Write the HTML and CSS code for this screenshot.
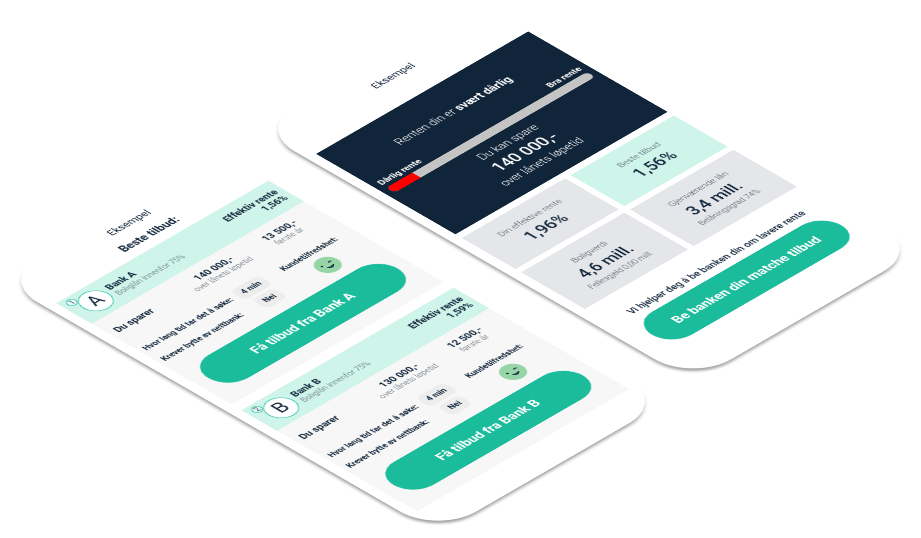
FILE: index.html
```html
<!DOCTYPE html>
<html lang="no">
<head>
<meta charset="utf-8">
<meta name="viewport" content="width=device-width, initial-scale=1">
<title>Boliglån</title>
<link rel="stylesheet" href="styles.css">
</head>
<body>
<main class="stage">

  <section class="phone phone-offers">
    <header class="offers-head">
      <p class="example">Eksempel</p>
      <h1 class="offers-title">Beste tilbud:</h1>
    </header>

    <article class="offer">
      <div class="offer-head">
        <span class="rank">1</span>
        <span class="logo">A</span>
        <div class="bank">
          <h2 class="strong">Bank A</h2>
          <p class="note">Boliglån innenfor 75%</p>
        </div>
        <div class="rate strong">
          <p>Effektiv rente</p>
          <p>1,56%</p>
        </div>
      </div>
      <div class="savings">
        <p class="strong">Du sparer</p>
        <div class="amount"><p class="strong">140 000,-</p><p class="note">over lånets løpetid</p></div>
        <div class="amount"><p class="strong">13 500,-</p><p class="note">første år</p></div>
      </div>
      <div class="details">
        <p class="question">Hvor lang tid tar det å søke:</p>
        <p class="answer">4 min</p>
        <p class="question satisfaction">Kundetilfredshet:</p>
        <p class="question">Krever bytte av nettbank:</p>
        <p class="answer">Nei</p>
        <svg class="smiley" viewBox="0 0 28 28" aria-hidden="true">
          <circle cx="14" cy="14" r="14" fill="#96d5a6"/>
          <circle cx="8" cy="12" r="1.3" fill="#10243a"/>
          <path d="M18 11.500q1.500-1.500 3 0" fill="none" stroke="#10243a" stroke-width="1.500" stroke-linecap="round"/>
          <path d="M10 17q5 6 9 0q-4.500 2.500-9 0z" fill="#10243a" stroke="#10243a" stroke-width="1" stroke-linejoin="round"/>
        </svg>
      </div>
      <button class="cta" type="button">Få tilbud fra Bank A</button>
    </article>

    <article class="offer">
      <div class="offer-head">
        <span class="rank">2</span>
        <span class="logo">B</span>
        <div class="bank">
          <h2 class="strong">Bank B</h2>
          <p class="note">Boliglån innenfor 75%</p>
        </div>
        <div class="rate strong">
          <p>Effektiv rente</p>
          <p>1,59%</p>
        </div>
      </div>
      <div class="savings">
        <p class="strong">Du sparer</p>
        <div class="amount"><p class="strong">130 000,-</p><p class="note">over lånets løpetid</p></div>
        <div class="amount"><p class="strong">12 500,-</p><p class="note">første år</p></div>
      </div>
      <div class="details">
        <p class="question">Hvor lang tid tar det å søke:</p>
        <p class="answer">4 min</p>
        <p class="question satisfaction">Kundetilfredshet:</p>
        <p class="question">Krever bytte av nettbank:</p>
        <p class="answer">Nei</p>
        <svg class="smiley" viewBox="0 0 28 28" aria-hidden="true">
          <circle cx="14" cy="14" r="14" fill="#96d5a6"/>
          <circle cx="8" cy="12" r="1.3" fill="#10243a"/>
          <path d="M18 11.500q1.500-1.500 3 0" fill="none" stroke="#10243a" stroke-width="1.500" stroke-linecap="round"/>
          <path d="M10 17q5 6 9 0q-4.500 2.500-9 0z" fill="#10243a" stroke="#10243a" stroke-width="1" stroke-linejoin="round"/>
        </svg>
      </div>
      <button class="cta" type="button">Få tilbud fra Bank B</button>
    </article>
  </section>

  <section class="phone phone-result">
    <header class="result-head">
      <p class="example">Eksempel</p>
    </header>
    <div class="hero">
      <p class="verdict">Renten din er <b>svært dårlig</b></p>
      <div class="scale-labels"><span>Dårlig rente</span><span>Bra rente</span></div>
      <div class="scale"><div class="scale-fill"></div></div>
      <p class="save-text">Du kan spare</p>
      <p class="save-amount">140 000,-</p>
      <p class="save-text">over lånets løpetid</p>
    </div>
    <div class="tiles">
      <div class="tile"><p class="tile-note">Din effektive rente</p><p class="tile-value">1,96%</p></div>
      <div class="tile tile-best"><p class="tile-note">Beste tilbud</p><p class="tile-value">1,56%</p></div>
      <div class="tile"><p class="tile-note">Boligverdi</p><p class="tile-value">4,6 mill.</p><p class="tile-sub">Fellesgjeld 0,00 mill.</p></div>
      <div class="tile"><p class="tile-note">Gjenværende lån</p><p class="tile-value">3,4 mill.</p><p class="tile-sub">Belåningsgrad 74%</p></div>
    </div>
    <p class="help">Vi hjelper deg å be banken din om lavere rente</p>
    <button class="cta" type="button">Be banken din matche tilbud</button>
  </section>

</main>
</body>
</html>
```

FILE: styles.css
```css
* { box-sizing: border-box; }

body {
  margin: 0;
  background: #fff;
  color: #10243a;
  font-family: Roboto, "Liberation Sans", sans-serif;
}

p, h1, h2 { margin: 0; font-size: inherit; font-weight: inherit; }

.stage {
  position: relative;
  min-height: 100vh;
  max-height: 100vh;
  overflow: hidden;
}

/* Phones lie on an isometric plane */
.phone {
  position: absolute;
  width: 324px;
  padding: 0 12px;
  border-radius: 54px;
  background: #fff;
  box-shadow: -4px 4px 4px -1px rgba(0, 0, 0, .36);
  transform-origin: 0 0;
  transform: rotateX(54.74deg) rotateZ(-45deg);
}

.phone-offers { left: -1px; top: 280px; padding-bottom: 28px; }
.phone-result { left: 256px; top: 129px; padding-bottom: 58px; }

.example { font-size: 13px; line-height: 20px; text-align: center; }

.cta {
  display: block;
  width: calc(100% - 32px);
  height: 56px;
  margin: 0 16px;
  padding: 0;
  border: 0;
  border-radius: 28px;
  background: #1abc9c;
  color: #fff;
  font: 700 16px/24px Roboto, "Liberation Sans", sans-serif;
}

/* Offers */
.offers-head { padding: 12px 0 5px; text-align: center; }
.offers-title { margin-top: 4px; font-size: 14px; font-weight: 700; line-height: 28px; }

.offer { margin-bottom: 14px; padding-bottom: 21px; background: #f7f7f7; }

.offer-head {
  position: relative;
  display: flex;
  align-items: center;
  gap: 5px;
  padding: 7px 7px 7px 13px;
  background: #cff4ea;
}

.rank {
  position: absolute;
  left: 6px;
  top: 4px;
  width: 12px;
  height: 12px;
  border: 1px solid #1abc9c;
  border-radius: 50%;
  background: #e9faf6;
  font-size: 9px;
  line-height: 10px;
  text-align: center;
}

.logo {
  width: 36px;
  height: 36px;
  border: 1px solid #1abc9c;
  border-radius: 50%;
  background: #fff;
  font-size: 23px;
  line-height: 34px;
  text-align: center;
}

.strong { font-size: 12px; font-weight: 700; line-height: 14px; }
.note { color: #5d6773; font-size: 10px; font-weight: 300; line-height: 14px; }
.rate { margin-left: auto; text-align: right; }

.savings {
  display: grid;
  grid-template-columns: 98fr 96fr 90fr;
  align-items: center;
  padding: 12px 8px 6px 8px;
  border-bottom: 1px solid #f1f1f2;
}

.amount { text-align: center; }

.details {
  display: grid;
  grid-template-columns: 130fr 42fr 122fr;
  grid-auto-rows: 26px;
  align-items: center;
  padding: 9px 0 13px 6px;
}

.question { font-size: 10px; font-weight: 700; line-height: 14px; white-space: nowrap; }
.satisfaction { text-align: center; }

.answer {
  justify-self: center;
  padding: 4px 7px;
  border-radius: 7px;
  background: #ededee;
  font-size: 10px;
  font-weight: 700;
  line-height: 14px;
}

.smiley { justify-self: center; width: 28px; height: 28px; }

/* Result */
.result-head { padding: 22px 0 31px; }

.hero {
  padding: 32px 8px 18px;
  background: #10243a;
  color: #fff;
  text-align: center;
}

.verdict { font-size: 14px; font-weight: 300; line-height: 24px; }
.verdict b { font-weight: 700; }

.scale-labels {
  display: flex;
  justify-content: space-between;
  margin-top: 19px;
  font-size: 11px;
  font-weight: 700;
  line-height: 14px;
}

.scale {
  height: 12px;
  margin: 2px 0 8px;
  border-radius: 6px;
  background: #c4c4c4;
  overflow: hidden;
}

.scale-fill { width: 13%; height: 100%; background: #f00; }

.save-text { font-size: 14px; font-weight: 300; line-height: 20px; }
.save-amount { font-size: 20px; font-weight: 500; line-height: 28px; }

.tiles {
  display: grid;
  grid-template-columns: 1fr 1fr;
  gap: 8px;
  margin: 9px 0 26px;
}

.tile { padding: 17px 0 15px; background: #e5e6e9; text-align: center; }
.tile-best { background: #cff4ea; }
.tile-note,
.tile-sub { color: #4a5562; font-size: 11px; font-weight: 300; line-height: 14px; }
.tile-sub { font-size: 10px; }
.tile-value { font-size: 20px; font-weight: 500; line-height: 30px; }

.help {
  margin-bottom: 5px;
  font-size: 12px;
  font-weight: 500;
  line-height: 20px;
  text-align: center;
  white-space: nowrap;
}
```
